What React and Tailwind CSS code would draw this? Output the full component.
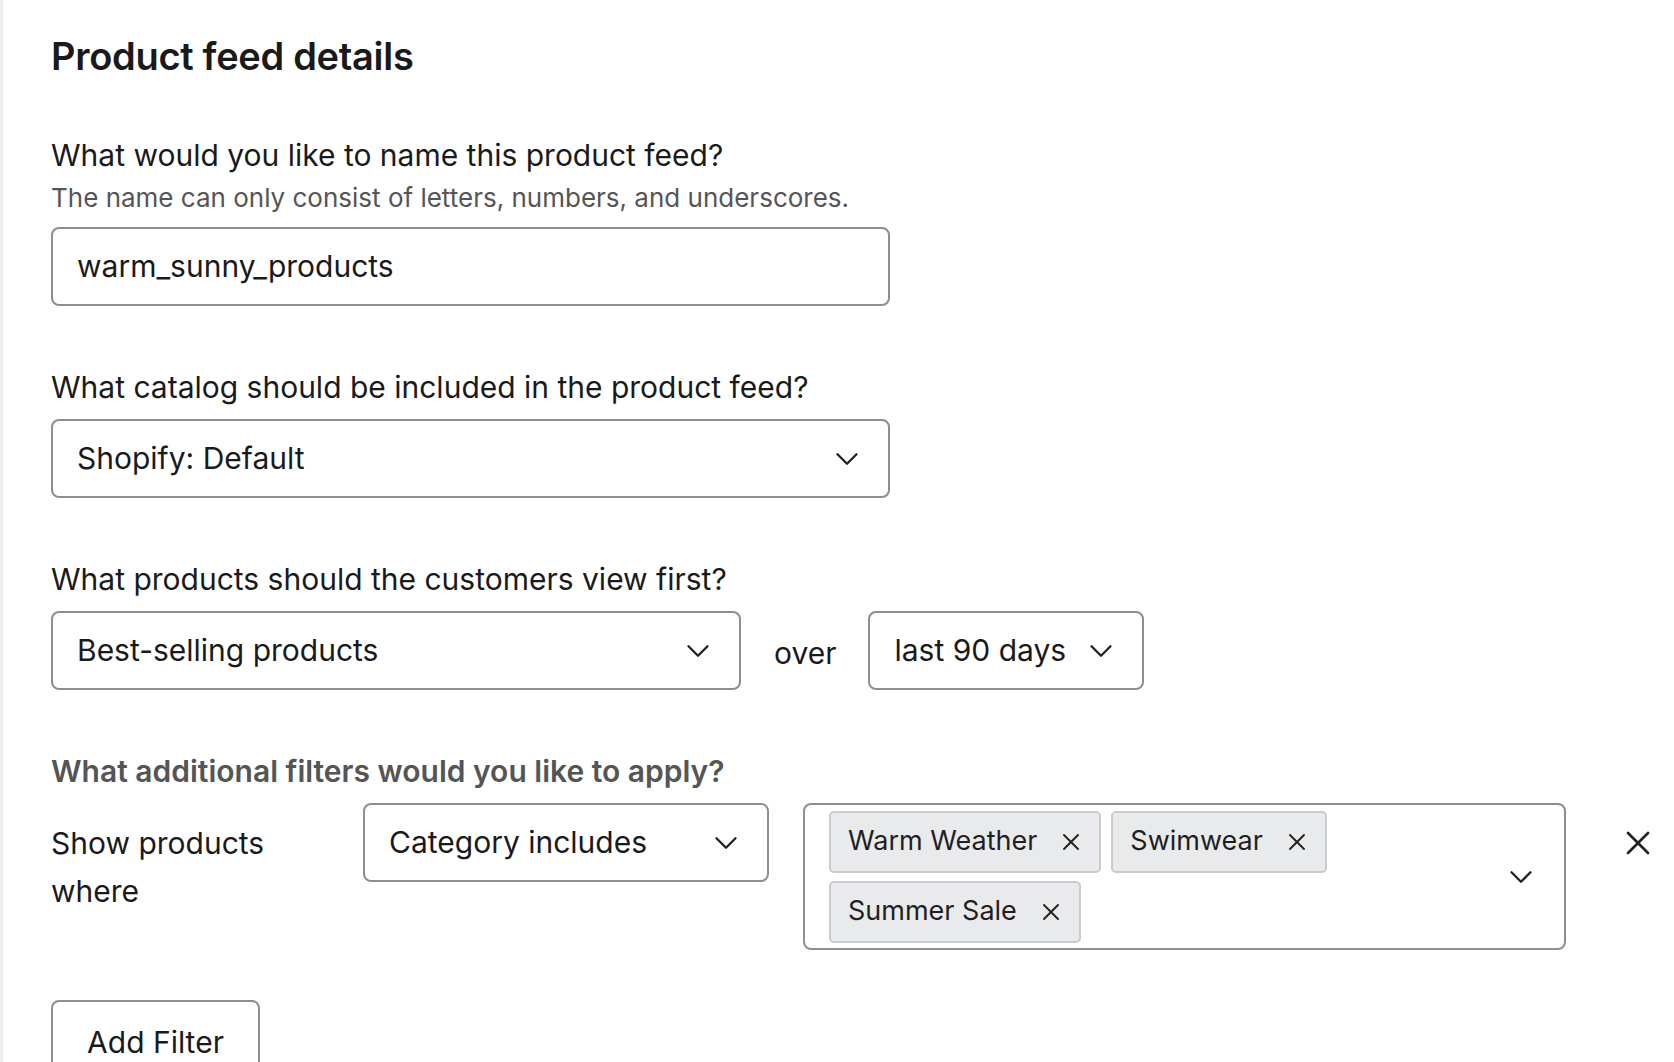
import React from 'react';
import { ChevronDown, X } from 'lucide-react';

const font = { fontFamily: 'Inter, "Noto Sans", sans-serif' };

const Select = ({ value, className }) => (
    <div className={`h-[79px] flex items-center justify-between border-2 border-[#8e8e8e] rounded-[8px] pl-[24px] pr-[22px] bg-white ${className}`}>
        <span className='text-[30px] text-[#1a1a1a]'>{value}</span>
        <ChevronDown size={38} strokeWidth={1.5} className='text-[#222]' />
    </div>
)

const Tag = ({ label }) => (
    <div className='h-[62px] flex items-center gap-[20px] bg-[#e9eaec] border-2 border-[#cacbce] rounded-[5px] pl-[17px] pr-[14px]'>
        <span className='text-[27px] text-[#1f1f1f]'>{label}</span>
        <X size={28} strokeWidth={1.6} className='text-[#222]' />
    </div>
)

export default function App() {
    return (
        <div style={font} className='min-h-[1062px] w-full bg-white border-l-[3px] border-l-[#ececec] pl-[48px] pt-[33px] text-[#1a1a1a] overflow-hidden'>
            <h1 className='text-[38px] leading-[46px] font-semibold tracking-[-0.3px]'>Product feed details</h1>

            <div className='mt-[58px] text-[30px] leading-[36px]'>What would you like to name this product feed?</div>
            <div className='mt-[10px] text-[26px] leading-[30px] text-[#555]'>The name can only consist of letters, numbers, and underscores.</div>
            <div className='mt-[14px] w-[839px] h-[79px] flex items-center border-2 border-[#8e8e8e] rounded-[8px] pl-[24px] text-[30px]'>
                warm_sunny_products
            </div>

            <div className='mt-[63px] text-[30px] leading-[36px]'>What catalog should be included in the product feed?</div>
            <Select value='Shopify: Default' className='mt-[14px] w-[839px]' />

            <div className='mt-[63px] text-[30px] leading-[36px]'>What products should the customers view first?</div>
            <div className='mt-[14px] flex items-center'>
                <Select value='Best-selling products' className='w-[690px]' />
                <span className='ml-[33px] mr-[32px] mt-[6px] text-[30px]'>over</span>
                <Select value='last 90 days' className='w-[276px]' />
            </div>

            <div className='mt-[63px] text-[30px] leading-[36px] font-semibold text-[#555]'>What additional filters would you like to apply?</div>
            <div className='mt-[14px] flex items-start'>
                <div className='w-[312px] pt-[16px] text-[30px] leading-[48px]'>Show products<br />where</div>
                <Select value='Category includes' className='w-[406px]' />
                <div className='ml-[34px] w-[763px] h-[147px] border-2 border-[#8e8e8e] rounded-[8px] flex items-center pl-[24px] pr-[24px]'>
                    <div className='flex-1 flex flex-wrap gap-x-[10px] gap-y-[8px]'>
                        <Tag label='Warm Weather' />
                        <Tag label='Swimwear' />
                        <Tag label='Summer Sale' />
                    </div>
                    <ChevronDown size={38} strokeWidth={1.5} className='text-[#222]' />
                </div>
                <X size={40} strokeWidth={1.6} className='ml-[52px] mt-[20px] text-[#222]' />
            </div>

            <button className='mt-[50px] w-[209px] h-[82px] border-2 border-[#8e8e8e] rounded-[8px] text-[30px] pt-[2px]'>Add Filter</button>
        </div>
    )
}
